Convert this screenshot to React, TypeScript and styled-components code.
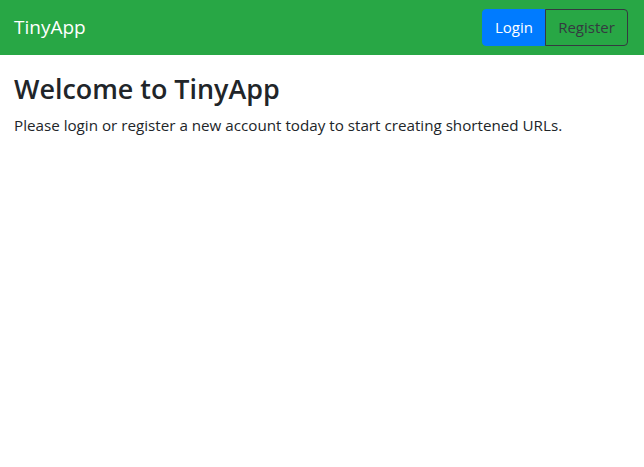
import React from "react";
import styled, { createGlobalStyle } from "styled-components";

const Global = createGlobalStyle`
  html, body { margin: 0; padding: 0; background: #fff; }
  body {
    font-family: "Open Sans", "Noto Sans", sans-serif;
    font-size: 16px;
    line-height: 1.5;
    color: #212529;
  }
  * { box-sizing: border-box; }
`;

const Navbar = styled.nav`
  display: flex;
  align-items: center;
  justify-content: space-between;
  height: 55px;
  padding: 0 16px 0 14px;
  background: #28a745;
`;

const Brand = styled.a`
  font-size: 19px;
  color: #fff;
  text-decoration: none;
  line-height: 1.5;
`;

const Group = styled.div`
  display: flex;
  height: 37px;
  margin-top: -1px;
`;

const Btn = styled.button<{ $variant: "primary" | "outline" }>`
  font-family: inherit;
  font-size: 15px;
  line-height: 1.5;
  padding: 0 12px;
  height: 100%;
  cursor: pointer;
  border: 1px solid ${(p) => (p.$variant === "primary" ? "#007bff" : "#343a40")};
  background: ${(p) => (p.$variant === "primary" ? "#007bff" : "transparent")};
  color: ${(p) => (p.$variant === "primary" ? "#fff" : "#343a40")};
  border-radius: ${(p) => (p.$variant === "primary" ? "4px 0 0 4px" : "0 4px 4px 0")};
  width: ${(p) => (p.$variant === "primary" ? "63px" : "83px")};
`;

const Main = styled.main`
  padding: 18px 14px 0;
`;

const Title = styled.h1`
  margin: 0 0 9px;
  font-size: 26.9px;
  font-weight: 600;
  line-height: 1.2;
  color: #212529;
`;

const Lead = styled.p`
  margin: 0;
  font-size: 15.2px;
`;

export default function App() {
  return (
    <>
      <Global />
      <Navbar>
        <Brand href="#">TinyApp</Brand>
        <Group>
          <Btn $variant="primary">Login</Btn>
          <Btn $variant="outline">Register</Btn>
        </Group>
      </Navbar>
      <Main>
        <Title>Welcome to TinyApp</Title>
        <Lead>Please login or register a new account today to start creating shortened URLs.</Lead>
      </Main>
    </>
  );
}
